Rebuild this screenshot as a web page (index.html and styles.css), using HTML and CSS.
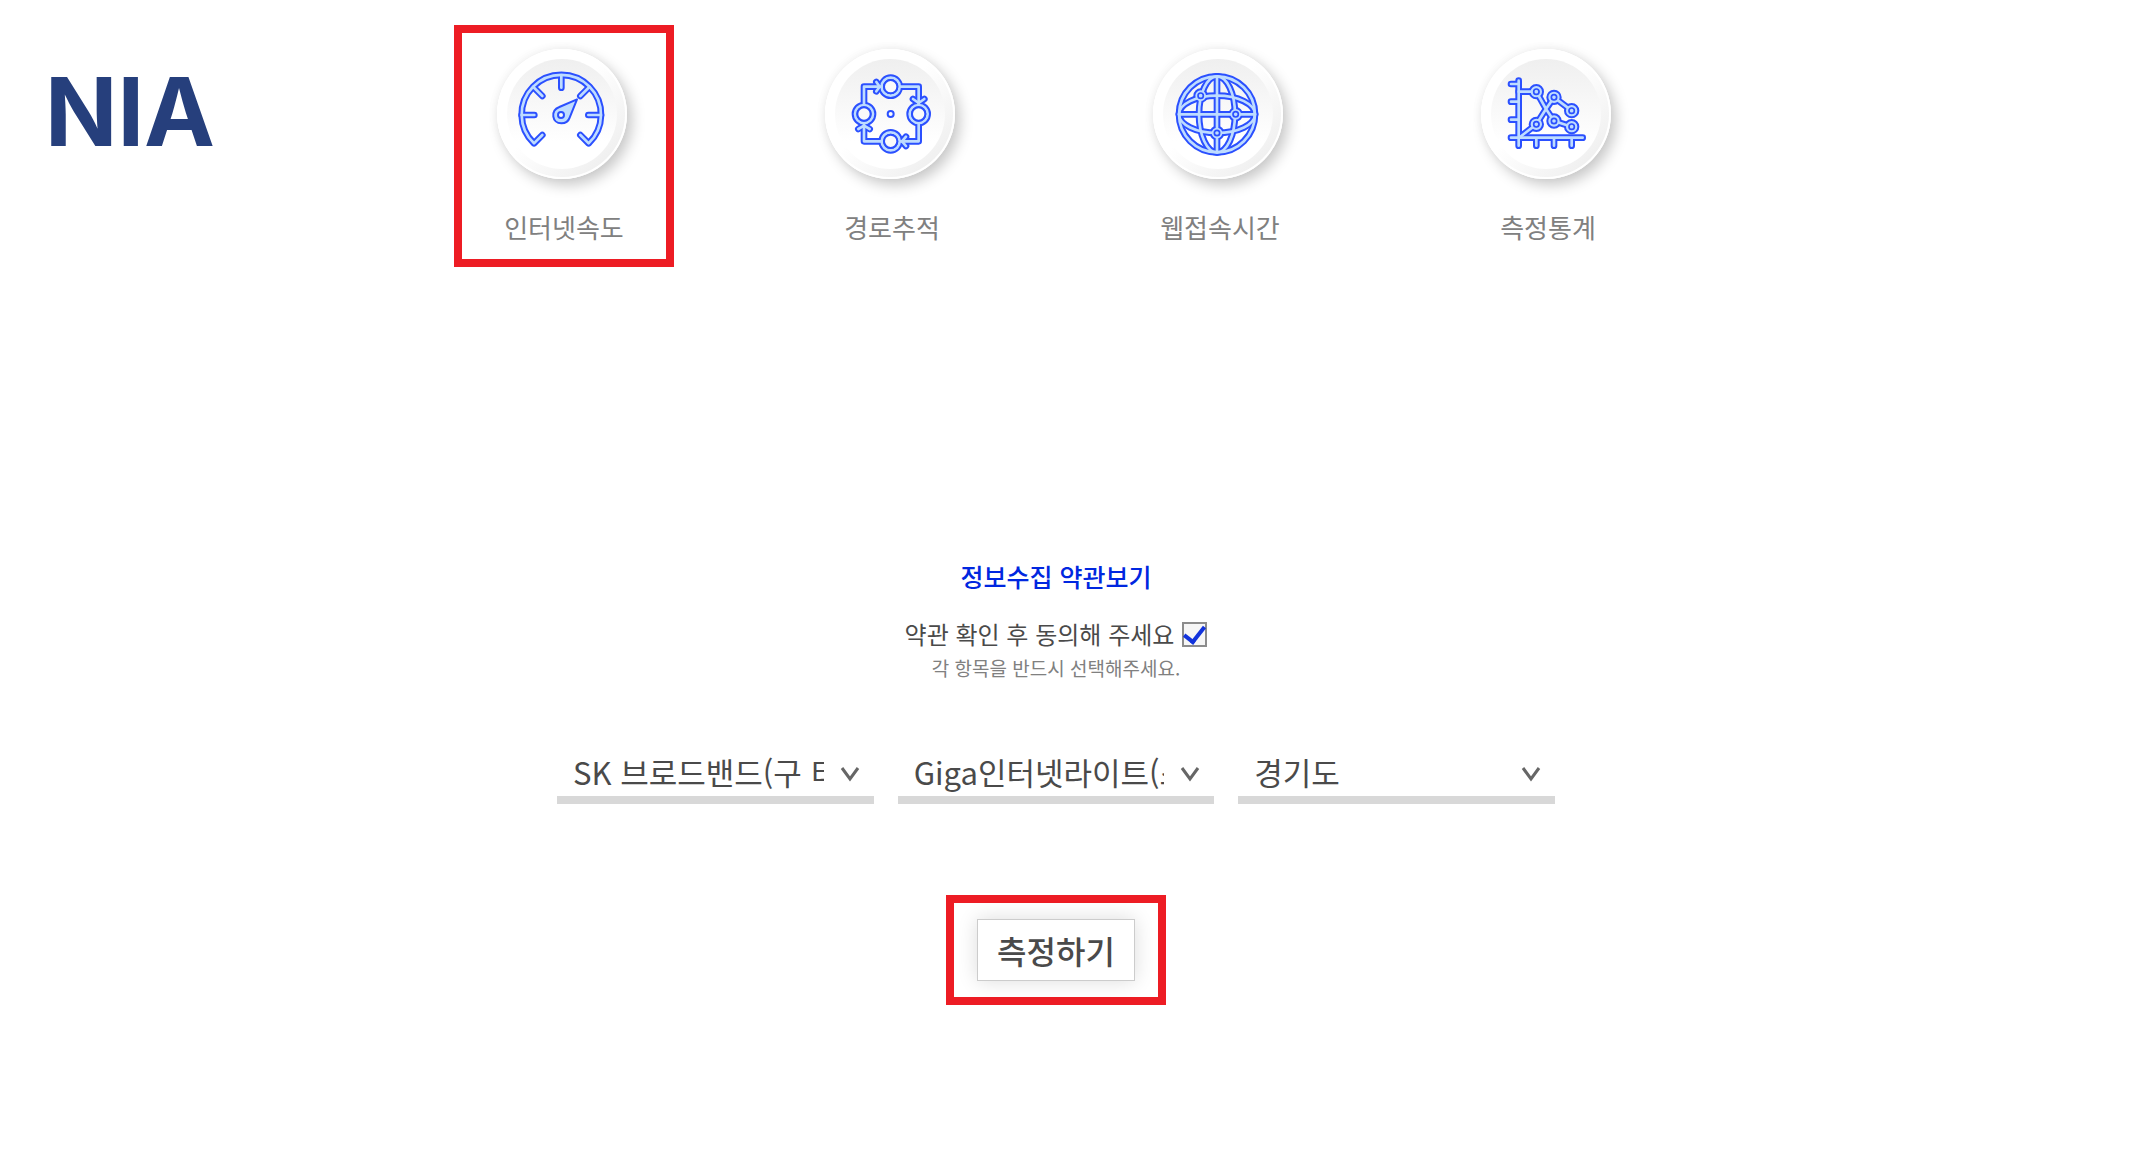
FILE: index.html
```html
<!DOCTYPE html>
<html lang="ko">
<head>
<meta charset="utf-8">
<title>NIA 인터넷 품질측정</title>
<meta name="viewport" content="width=device-width, initial-scale=1">
<link rel="stylesheet" href="styles.css">
</head>
<body>
<svg class="defs" aria-hidden="true">
  <defs>
    <g id="speed">
      <path d="M136 258 L111 283 A119 119 0 1 1 275 283 L250 258"/>
      <path d="M193 80V116M74 198H112M312 198H274M109 114L136 141M277 114L250 141"/>
    </g>
    <g id="route">
      <path d="M117 167V113H169M225 113H281V167M281 223V277H225M169 277H117V223"/>
      <path d="M154 99L164 113L154 127M264 150L281 162L298 150M243 263L231 277L243 291M100 240L117 230L134 240"/>
      <circle cx="197" cy="113" r="27"/><circle cx="117" cy="195" r="27"/>
      <circle cx="281" cy="195" r="27"/><circle cx="197" cy="277" r="27"/>
    </g>
    <g id="globe">
      <circle cx="192" cy="196" r="114"/>
      <ellipse cx="192" cy="196" rx="54" ry="114"/>
      <ellipse cx="192" cy="196" rx="114" ry="56"/>
      <path d="M192 82V310M78 196H306"/>
      <circle cx="143" cy="140" r="12"/><circle cx="248" cy="196" r="12"/><circle cx="192" cy="252" r="12"/>
    </g>
    <g id="stats">
      <path d="M113 95V290M90 266H305M90 105H113M90 158H113M90 212H113M166 266V290M219 266V290M272 266V290"/>
      <path d="M113 128H166L195 180L219 216L272 233M117 264L166 226L195 180L219 145L272 185"/>
      <circle cx="166" cy="128" r="13"/><circle cx="219" cy="145" r="13"/><circle cx="272" cy="185" r="13"/>
      <circle cx="166" cy="226" r="13"/><circle cx="219" cy="216" r="13"/><circle cx="272" cy="233" r="13"/>
    </g>
  </defs>
</svg>

<header class="header">
  <a class="logo" href="#">NIA</a>
  <nav class="nav">
    <a class="nav-item marked" href="#">
      <span class="disc"><svg viewBox="0 0 390 390" aria-hidden="true">
        <use href="#speed" class="edge"/><use href="#speed" class="core"/>
        <path class="shape" d="M240 151L187 174C159 185 165 223 193 223C207 223 215 215 218 206Z"/>
        <circle class="hole" cx="192" cy="198" r="9"/>
      </svg></span>
      <span>인터넷속도</span>
    </a>
    <a class="nav-item" href="#">
      <span class="disc"><svg viewBox="0 0 390 390" aria-hidden="true">
        <use href="#route" class="edge"/><use href="#route" class="core"/>
        <g class="hole"><circle cx="197" cy="113" r="20"/><circle cx="117" cy="195" r="20"/><circle cx="281" cy="195" r="20"/><circle cx="197" cy="277" r="20"/><circle cx="197" cy="195" r="9"/></g>
      </svg></span>
      <span>경로추적</span>
    </a>
    <a class="nav-item" href="#">
      <span class="disc"><svg viewBox="0 0 390 390" aria-hidden="true">
        <use href="#globe" class="edge"/><use href="#globe" class="core"/>
        <g class="node"><circle cx="143" cy="140" r="8"/><circle cx="248" cy="196" r="8"/><circle cx="192" cy="252" r="8"/></g>
      </svg></span>
      <span>웹접속시간</span>
    </a>
    <a class="nav-item" href="#">
      <span class="disc"><svg viewBox="0 0 390 390" aria-hidden="true">
        <use href="#stats" class="edge"/><use href="#stats" class="core"/>
        <g class="node"><circle cx="166" cy="128" r="8"/><circle cx="219" cy="145" r="8"/><circle cx="272" cy="185" r="8"/><circle cx="166" cy="226" r="8"/><circle cx="219" cy="216" r="8"/><circle cx="272" cy="233" r="8"/></g>
      </svg></span>
      <span>측정통계</span>
    </a>
  </nav>
</header>

<main class="main">
  <a class="terms" href="#">정보수집 약관보기</a>
  <div class="agree">
    <label for="agree">약관 확인 후 동의해 주세요</label>
    <input type="checkbox" id="agree" checked>
  </div>
  <p class="hint">각 항목을 반드시 선택해주세요.</p>
  <form class="form">
    <div class="fields">
      <div class="field">
        <select aria-label="통신사"><option>SK 브로드밴드(구 티브로드)</option></select>
        <svg viewBox="0 0 20 16" aria-hidden="true"><path d="M2 2L10 13L18 2"/></svg>
      </div>
      <div class="field">
        <select aria-label="상품"><option>Giga인터넷라이트(스마트)</option></select>
        <svg viewBox="0 0 20 16" aria-hidden="true"><path d="M2 2L10 13L18 2"/></svg>
      </div>
      <div class="field">
        <select aria-label="지역"><option>경기도</option></select>
        <svg viewBox="0 0 20 16" aria-hidden="true"><path d="M2 2L10 13L18 2"/></svg>
      </div>
    </div>
    <div class="submit marked">
      <button type="button">측정하기</button>
    </div>
  </form>
</main>
</body>
</html>
```
FILE: styles.css
```css
* { box-sizing: border-box; }

body {
  margin: 0;
  padding: 25px 37px 48px 0;
  background: #fff;
  color: #4a4a4a;
  font-family: "Noto Sans CJK KR", "Noto Sans", sans-serif;
  font-size: 25px;
  line-height: 36px;
}

a { color: inherit; text-decoration: none; }

.defs { position: absolute; width: 0; height: 0; }

.marked { border: 8px solid #ed1c24; }

.header {
  display: grid;
  grid-template-columns: 1fr auto 1fr;
}

.logo {
  padding: 39px 0 0 45px;
  color: #263f7c;
  font-family: Inter, sans-serif;
  font-size: 95px;
  font-weight: 700;
  line-height: 96px;
}

.nav { display: flex; gap: 108px; }

.nav-item {
  display: flex;
  flex-direction: column;
  align-items: center;
  gap: 30px;
  width: 220px;
  height: 242px;
  padding-top: 24px;
  color: #808080;
  font-size: 26px;
}

.nav-item.marked { padding-top: 16px; }

.disc {
  display: grid;
  place-items: center;
  width: 130px;
  height: 130px;
  margin-right: 4px;
  border-radius: 50%;
  background: linear-gradient(135deg, #fff 45%, #f0f0f0 85%);
  box-shadow:
    inset 0 0 0 2px #fff,
    5px 6px 14px rgba(0, 0, 0, 0.22),
    -2px -2px 10px rgba(0, 0, 0, 0.03);
}

.disc::before {
  content: "";
  grid-area: 1 / 1;
  width: 110px;
  height: 110px;
  border-radius: 50%;
  background: linear-gradient(#efefef, #fff 75%);
}

.disc svg {
  grid-area: 1 / 1;
  z-index: 1;
  width: 130px;
  height: 130px;
}

.edge, .core { fill: none; stroke-linecap: round; stroke-linejoin: round; }
.edge { stroke: #2b50ff; stroke-width: 20px; }
.core { stroke: #bedcff; stroke-width: 8px; }
.shape { fill: #bedcff; stroke: #2b50ff; stroke-width: 6px; stroke-linejoin: round; }
.hole { fill: #fafafa; stroke: #2b50ff; stroke-width: 6px; }
.node { fill: #bedcff; stroke: #2b50ff; stroke-width: 5px; }

.main {
  display: flex;
  flex-direction: column;
  align-items: center;
  padding-top: 291px;
}

.terms { color: #0027e0; font-weight: 500; }

.agree {
  display: flex;
  align-items: center;
  gap: 8px;
  margin-top: 22px;
  font-size: 24px;
}

.agree input {
  appearance: none;
  display: grid;
  place-items: center;
  width: 25px;
  height: 25px;
  margin: 0;
  border: 2px solid #8c8c8c;
  background: #f6f6f6;
}

.agree input:checked::after {
  content: "";
  width: 9px;
  height: 17px;
  border: solid #1233dc;
  border-width: 0 4px 4px 0;
  transform: translateY(-2px) rotate(38deg);
}

.hint {
  margin: 4px 0 0;
  color: #808080;
  font-size: 19px;
  line-height: 24px;
}

.form {
  display: flex;
  flex-direction: column;
  align-items: center;
  gap: 91px;
  width: 100%;
  margin-top: 68px;
}

.fields {
  display: grid;
  grid-template-columns: repeat(3, 1fr);
  gap: 24px;
  width: 100%;
  max-width: 998px;
}

.field { position: relative; }

.field select {
  appearance: none;
  display: block;
  width: 100%;
  height: 56px;
  padding: 0 50px 0 16px;
  border: 0;
  border-bottom: 8px solid #d8d8d8;
  border-radius: 0;
  background: #fff;
  color: #4a4a4a;
  font: 400 31px/48px "Noto Sans CJK KR", "Noto Sans", sans-serif;
}

.field svg {
  position: absolute;
  top: 18px;
  right: 14px;
  width: 20px;
  height: 16px;
  fill: none;
  stroke: #666;
  stroke-width: 3px;
  pointer-events: none;
}

.submit {
  display: grid;
  place-items: center;
  width: 220px;
  height: 110px;
}

.submit button {
  width: 158px;
  height: 62px;
  padding: 0;
  border: 1px solid #ccc;
  background: #fff;
  box-shadow: 0 0 20px rgba(0, 0, 0, 0.14);
  color: #4a4a4a;
  font: 500 32px/48px "Noto Sans CJK KR", "Noto Sans", sans-serif;
}
```
